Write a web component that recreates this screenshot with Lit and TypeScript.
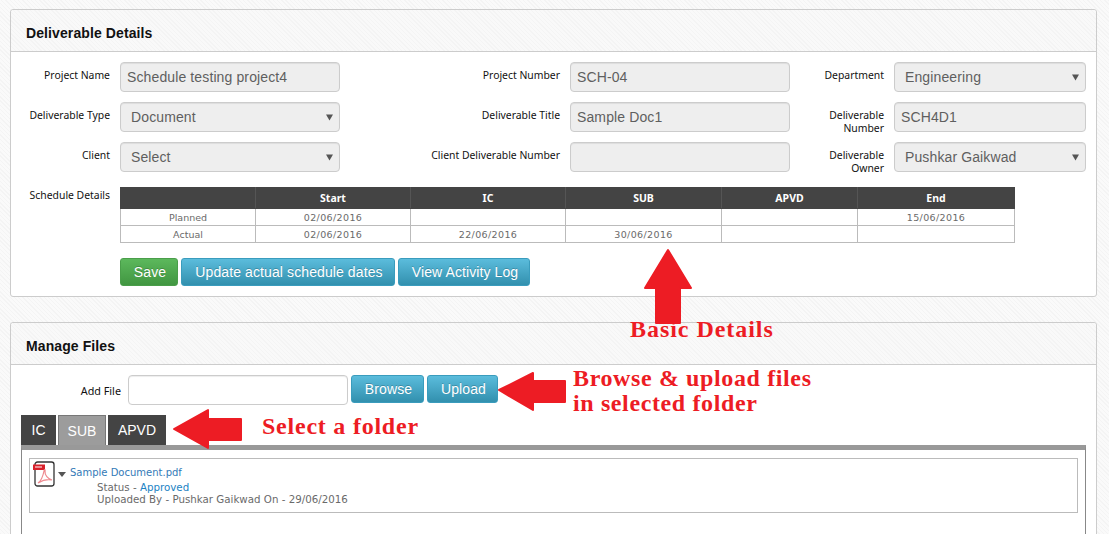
import { LitElement, html, css, svg } from "lit";
import { customElement } from "lit/decorators.js";

const scheduleCols = [135, 155, 155, 156, 136, 157];
const scheduleHead = ["", "Start", "IC", "SUB", "APVD", "End"];
const scheduleRows = [
  ["Planned", "02/06/2016", "", "", "", "15/06/2016"],
  ["Actual", "02/06/2016", "22/06/2016", "30/06/2016", "", ""],
];

@customElement("app-root")
export class AppRoot extends LitElement {
  static styles = css`
    :host {
      display: block;
      position: relative;
      height: 534px;
      overflow: hidden;
      font-family: "Liberation Sans", Arial, sans-serif;
      background-color: #fafafa;
      background-image: repeating-linear-gradient(45deg, #f4f4f4 0 1px, transparent 1px 3px);
    }
    .page {
      display: flex;
      flex-direction: column;
      gap: 25px;
      padding: 9px 12px 0 10px;
    }
    .panel {
      background: #fff;
      border: 1px solid #ccc;
      border-radius: 3px;
    }
    .panel-head {
      height: 42px;
      box-sizing: border-box;
      padding: 15px 15px 0;
      font-size: 14px;
      line-height: 17px;
      font-weight: bold;
      letter-spacing: 0.1px;
      color: #111;
      border-bottom: 1px solid #ccc;
      background-color: #f9f9f9;
      background-image: repeating-linear-gradient(45deg, #f4f4f4 0 1px, transparent 1px 3px);
      border-radius: 3px 3px 0 0;
    }
    .panel-body { padding: 10px 10px 10px; }
    .form {
      display: grid;
      grid-template-columns: 99px 220px 230px 220px 104px 192px;
      grid-auto-rows: 30px;
      row-gap: 10px;
    }
    .label {
      padding: 7px 10px 0 0;
      text-align: right;
      font-family: "Noto Sans", sans-serif;
      font-size: 10.4px;
      line-height: 13px;
      color: #111;
    }
    .field {
      display: flex;
      align-items: center;
      justify-content: space-between;
      box-sizing: border-box;
      height: 30px;
      padding: 0 6px;
      background: #eee;
      border: 1px solid #ccc;
      border-radius: 4px;
      box-shadow: inset 0 1px 1px rgba(0, 0, 0, 0.075);
      font-size: 14px;
      letter-spacing: 0.12px;
      color: #5f5f5f;
    }
    .field.select { padding: 0 6px 0 10px; }
    .caret { width: 7px; height: 7px; fill: #555; flex: none; }
    .schedule {
      display: grid;
      grid-template-columns: 99px auto;
      justify-content: start;
      margin-top: 15px;
    }
    .schedule .label { padding-top: 2px; }
    table {
      border-collapse: collapse;
      table-layout: fixed;
      width: 894px;
      font-family: "DejaVu Sans", sans-serif;
      font-size: 9.5px;
    }
    th {
      height: 20px;
      padding: 0;
      background: #444;
      color: #fff;
      font-weight: bold;
      font-family: "Noto Sans", sans-serif;
      font-size: 10.5px;
      border: 1px solid #555;
      border-top-color: #444;
      border-bottom-color: #444;
    }
    th:first-child { border-left-color: #444; }
    th:last-child { border-right-color: #444; }
    td {
      height: 16px;
      padding: 0;
      text-align: center;
      color: #6a6a6a;
      border: 1px solid #bbb;
      letter-spacing: 0.38px;
    }
    td:first-child { letter-spacing: 0; }
    .actions {
      display: flex;
      gap: 3px;
      margin: 15px 0 0 99px;
    }
    .btn {
      display: flex;
      align-items: center;
      justify-content: center;
      box-sizing: border-box;
      height: 28px;
      padding-left: 2px;
      color: #fff;
      font-size: 14px;
      letter-spacing: 0.1px;
      border-radius: 3px;
      text-shadow: 0 -1px 0 rgba(0, 0, 0, 0.2);
    }
    .btn.info {
      background: linear-gradient(#5bbcdc, #3290ae);
      border: 1px solid #3a9cbd;
    }
    .btn.ok {
      background: linear-gradient(#5cb85c, #419641);
      border: 1px solid #4a9e4a;
    }
    .w-save { width: 58px; }
    .w-update { width: 214px; }
    .w-log { width: 132px; }
    .w-browse { width: 73px; }
    .w-upload { width: 71px; }
    .add {
      display: flex;
      align-items: flex-start;
      gap: 3px;
      height: 30px;
    }
    .add-label {
      width: 100px;
      box-sizing: border-box;
      padding: 9px 0 0 0;
      margin-right: 4px;
      text-align: right;
      font-family: "Noto Sans", sans-serif;
      font-size: 10.8px;
      line-height: 13px;
      color: #111;
    }
    .add-input {
      box-sizing: border-box;
      width: 220px;
      height: 30px;
      background: #fff;
      border: 1px solid #ccc;
      border-radius: 4px;
      box-shadow: inset 0 1px 1px rgba(0, 0, 0, 0.075);
    }
    .tabs {
      display: flex;
      gap: 2px;
      margin-top: 10px;
    }
    .tab {
      display: flex;
      align-items: center;
      justify-content: center;
      height: 30px;
      box-sizing: border-box;
      background: #444;
      color: #fff;
      font-size: 14px;
    }
    .tab.active {
      background: #9c9c9c;
      color: #fff;
      border: 1px solid #777;
      border-bottom: none;
    }
    .t-ic { width: 35px; }
    .t-sub { width: 48px; }
    .t-apvd { width: 58px; }
    .tab-content {
      border-top: 5px solid #999;
      border-left: 1px solid #888;
      border-right: 1px solid #888;
      padding: 8px 7px 60px;
    }
    .file {
      display: flex;
      align-items: flex-start;
      height: 55px;
      box-sizing: border-box;
      border: 1px solid #bbb;
      padding: 2px 0 0 4px;
      font-family: "DejaVu Sans", sans-serif;
      font-size: 10.28px;
      line-height: 12px;
      color: #6a6a6a;
    }
    .pdf { width: 21px; height: 26px; flex: none; overflow: visible; }
    .drop { width: 8px; height: 5px; fill: #555; margin: 11px 4px 0 3px; flex: none; }
    .file-text { padding-top: 6px; }
    .link { font-size: 10px; color: #337ab7; }
    .meta { margin: 2px 0 0 27px; }
    .approved { color: #1a82c4; }
    .overlay {
      position: absolute;
      inset: 0;
      width: 1109px;
      height: 534px;
      pointer-events: none;
    }
    .overlay polygon {
      fill: #ed1c24;
      stroke: #ed1c24;
      stroke-width: 2;
      stroke-linejoin: round;
    }
    .note {
      position: absolute;
      white-space: nowrap;
      font-family: "Liberation Serif", serif;
      font-weight: bold;
      color: #ed1c24;
      font-size: 24px;
      line-height: 25px;
      letter-spacing: 0.62px;
    }
    .n-basic { left: 630px; top: 317px; letter-spacing: 0.96px; }
    .n-browse { left: 573px; top: 366px; }
    .n-select { left: 262px; top: 414px; letter-spacing: 0.77px; }
  `;

  private caret() {
    return html`<svg class="caret" viewBox="0 0 7 7"><path d="M0 .5h7L3.5 6.5z"></path></svg>`;
  }

  private arrows() {
    return svg`
      <polygon points="668,250 691,288 680,288 680,323 656,323 656,288 645,288"></polygon>
      <polygon points="499,390 533,373 533,381 565,381 565,402 533,402 533,410"></polygon>
      <polygon points="174,429 208,410 208,419 241,419 241,440 208,440 208,448"></polygon>
    `;
  }

  render() {
    return html`
      <div class="page">
        <section class="panel">
          <div class="panel-head">Deliverable Details</div>
          <div class="panel-body">
            <div class="form">
              <div class="label">Project Name</div>
              <div class="field">Schedule testing project4</div>
              <div class="label">Project Number</div>
              <div class="field">SCH-04</div>
              <div class="label">Department</div>
              <div class="field select">Engineering ${this.caret()}</div>

              <div class="label">Deliverable Type</div>
              <div class="field select">Document ${this.caret()}</div>
              <div class="label">Deliverable Title</div>
              <div class="field">Sample Doc1</div>
              <div class="label">Deliverable<br />Number</div>
              <div class="field">SCH4D1</div>

              <div class="label">Client</div>
              <div class="field select">Select ${this.caret()}</div>
              <div class="label">Client Deliverable Number</div>
              <div class="field"></div>
              <div class="label">Deliverable<br />Owner</div>
              <div class="field select">Pushkar Gaikwad ${this.caret()}</div>
            </div>

            <div class="schedule">
              <div class="label">Schedule Details</div>
              <table>
                <colgroup>
                  ${scheduleCols.map((w) => html`<col style="width:${w}px" />`)}
                </colgroup>
                <thead>
                  <tr>${scheduleHead.map((h) => html`<th>${h}</th>`)}</tr>
                </thead>
                <tbody>
                  ${scheduleRows.map(
                    (r) => html`<tr>${r.map((c) => html`<td>${c}</td>`)}</tr>`
                  )}
                </tbody>
              </table>
            </div>

            <div class="actions">
              <div class="btn ok w-save">Save</div>
              <div class="btn info w-update">Update actual schedule dates</div>
              <div class="btn info w-log">View Activity Log</div>
            </div>
          </div>
        </section>

        <section class="panel">
          <div class="panel-head">Manage Files</div>
          <div class="panel-body">
            <div class="add">
              <div class="add-label">Add File</div>
              <div class="add-input"></div>
              <div class="btn info w-browse">Browse</div>
              <div class="btn info w-upload">Upload</div>
            </div>
            <div class="tabs">
              <div class="tab t-ic">IC</div>
              <div class="tab active t-sub">SUB</div>
              <div class="tab t-apvd">APVD</div>
            </div>
            <div class="tab-content">
              <div class="file">
                <svg class="pdf" viewBox="0 0 21 26">
                  <rect x="1" y="1" width="19" height="24" rx="2.5" fill="#fff" stroke="#333" stroke-width="1.3"></rect>
                  <path d="M-1 3.5h12v5.5H-1z" fill="#d8202a"></path>
                  <path d="M1 5.5h7v1H1z" fill="#fff"></path>
                  <path d="M4 22c3-2 5-7 6-12 0-2 1.5-2 1 0-.5 4 3 8 7 9-4-1-9 0-14 3z" fill="none" stroke="#ee8a90" stroke-width="1.2"></path>
                </svg>
                <svg class="drop" viewBox="0 0 8 5"><path d="M0 0h8L4 5z"></path></svg>
                <div class="file-text">
                  <div class="link">Sample Document.pdf</div>
                  <div class="meta">
                    <div>Status - <span class="approved">Approved</span></div>
                    <div>Uploaded By - Pushkar Gaikwad On - 29/06/2016</div>
                  </div>
                </div>
              </div>
            </div>
          </div>
        </section>
      </div>

      <svg class="overlay" viewBox="0 0 1109 534">${this.arrows()}</svg>
      <div class="note n-basic">Basic Details</div>
      <div class="note n-browse">Browse &amp; upload files<br />in selected folder</div>
      <div class="note n-select">Select a folder</div>
    `;
  }
}
